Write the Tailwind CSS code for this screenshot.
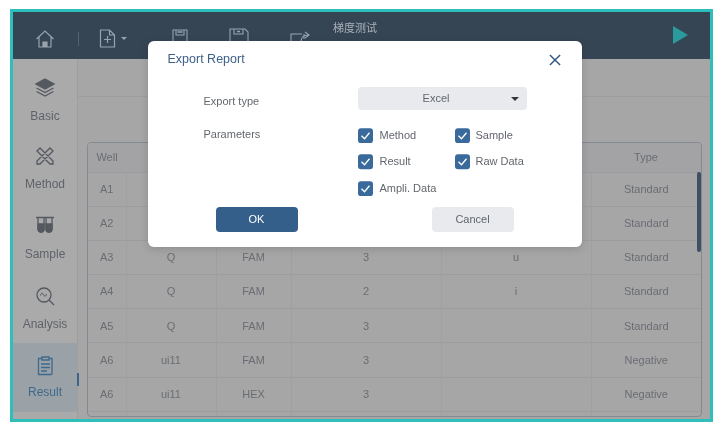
<!DOCTYPE html>
<html lang="en">
  <head>
    <meta charset="UTF-8">
    <title>Export Report</title>
    <script src="https://cdn.jsdelivr.net/npm/@tailwindcss/browser@4"></script>
  </head>
  <body class="font-['Liberation_Sans','Noto_Sans_CJK_SC',sans-serif] bg-white">
    <div class="w-[722px] h-[429px] bg-white pt-[9px] pl-[10px] pr-[9px] pb-[7px] overflow-hidden blur-[0.6px]">
      <div class="relative w-full h-full border-[3.5px] border-[#2fbfbb] bg-[#a6a6a7] flex flex-col overflow-hidden">

        <!-- top bar -->
        <header class="relative h-[47px] shrink-0 bg-[#364554] flex items-center text-[#98a3ad]">
          <div class="w-[65px] flex justify-center pt-[6px] pr-[2px]">
            <svg class="w-[20px] h-[20px]" viewBox="0 0 20 20" fill="none" stroke="currentColor" stroke-width="1.2"><path d="M1.5 10 10 2l8.5 8M4 8v10h12V8"/><path d="M8 18v-5h4v5" fill="currentColor"/></svg>
          </div>
          <div class="w-px h-[14px] bg-[#566472] mt-[6px]"></div>
          <div class="flex items-center ml-[20px] pt-[6px]">
            <svg class="w-[17px] h-[19px]" viewBox="0 0 16 19" fill="none" stroke="currentColor" stroke-width="1.2"><path d="M1 1h9l5 5v12H1zM10 1v5h5M8 7v7M4.5 10.500h7"/></svg>
            <span class="ml-[5px] w-0 h-0 border-x-[3px] border-x-transparent border-t-[3px] border-t-[#98a3ad]"></span>
          </div>
          <div class="flex items-center gap-[41px] ml-[45px] pt-[2px]">
            <svg class="w-[16px] h-[17px]" viewBox="0 0 16 17" fill="none" stroke="currentColor" stroke-width="1.100"><path d="M1 16V2h14v14M4 2v5h8V2"/><path d="M5.500 4h5" stroke-width="1.500"/></svg>
            <svg class="w-[20px] h-[17px]" viewBox="0 0 20 17" fill="none" stroke="currentColor" stroke-width="1.100"><path d="M1 16V1h15l3 3v12M5 1v5h9V1"/><path d="M8 3.500h3" stroke-width="1.500"/></svg>
            <svg class="w-[22px] h-[17px] mt-[6px]" viewBox="0 0 22 17" fill="none" stroke="currentColor" stroke-width="1.100"><path d="M12 3H1v14M14 8V3l0 0M11 11c0-5 3-7 7-7M15 1l4 3-4 3"/></svg>
          </div>
          <span class="absolute left-[320px] top-[9px] text-[11px] leading-[14px] text-[#a9b1b9]">梯度测试</span>
          <span class="absolute left-[660px] top-[13.500px] w-0 h-0 border-y-[9px] border-y-transparent border-l-[15px] border-l-[#2b9a9c]"></span>
        </header>

        <div class="flex flex-1 min-h-0">
          <!-- side nav -->
          <nav class="relative w-[65px] shrink-0 pt-[6.500px] bg-[#aaaaab] border-r border-[#9e9e9f] flex flex-col text-[12px] text-[#5f6368]">
            <a class="h-[69.4px] flex flex-col items-center pt-[12px]">
              <svg class="w-[20px] h-[19px] text-[#54595f]" viewBox="0 0 20 19" fill="none" stroke="currentColor" stroke-width="1.300"><path d="M10 1 19 6l-9 5-9-5z" fill="currentColor"/><path d="M1.500 10 10 14.500 18.500 10M1.500 13.500 10 18l8.500-4.500"/></svg>
              <span class="mt-[12.500px] leading-[14px]">Basic</span>
            </a>
            <a class="h-[69.4px] flex flex-col items-center pt-[11.500px]">
              <svg class="w-[20px] h-[20px] text-[#54595f]" viewBox="0 0 20 20" fill="none" stroke="currentColor" stroke-width="1.300"><path d="M2 5 5 2l13 13v3h-3zM15 2l3 3L5 18l-3 0 0-3z"/></svg>
              <span class="mt-[11px] leading-[14px]">Method</span>
            </a>
            <a class="h-[69.4px] flex flex-col items-center pt-[12px]">
              <svg class="w-[18px] h-[18px] text-[#54595f]" viewBox="0 0 18 18" fill="none" stroke="currentColor" stroke-width="1.300"><path d="M0 1.500h18M2 2v11a3 3 0 0 0 6 0V2M10 2v11a3 3 0 0 0 6 0V2"/><path d="M2 8h6v5a3 3 0 0 1-6 0zM10 8h6v5a3 3 0 0 1-6 0z" fill="currentColor"/></svg>
              <span class="mt-[13px] leading-[14px]">Sample</span>
            </a>
            <a class="h-[69.4px] flex flex-col items-center pt-[12px]">
              <svg class="w-[20px] h-[20px] text-[#54595f]" viewBox="0 0 20 20" fill="none" stroke="currentColor" stroke-width="1.300"><circle cx="9" cy="9" r="7"/><path d="m14 14 5 5"/><path d="M5.500 9.500c1-3 2-3 3-.8s2 2.300 3-.7" stroke-width="1"/></svg>
              <span class="mt-[11px] leading-[14px]">Analysis</span>
            </a>
            <a class="h-[69.4px] flex flex-col items-center pt-[12.500px] bg-[#9aa1a7] text-[#3f6a8c]">
              <svg class="w-[17px] h-[20px]" viewBox="0 0 17 20" fill="none" stroke="currentColor" stroke-width="1.300"><path d="M5 2.500H1.500v16h12.500a1 1 0 0 0 1-1V2.500h-3.500M5 1h7v3H5zM4 8h9M4 11.500h9M4 15h6"/></svg>
              <span class="mt-[9.500px] leading-[14px]">Result</span>
            </a>
            <span class="absolute right-[-2px] top-[314px] w-[2px] h-[13px] bg-[#3a6488]"></span>
          </nav>

          <!-- main content -->
          <main class="flex-1 min-w-0 flex flex-col">
            <div class="h-[38px] shrink-0 border-b border-[#9e9e9f]"></div>
            <div class="relative mt-[45px] ml-[9px] mr-[8px] h-[275px] border border-[#838a92] rounded-[4px] overflow-hidden text-[11px] text-[#6a6d72]">
              <table class="w-full table-fixed border-collapse text-center">
                <colgroup>
                  <col class="w-[38px]"><col class="w-[90px]"><col class="w-[75px]"><col class="w-[150px]"><col class="w-[150px]"><col>
                </colgroup>
                <thead>
                  <tr class="h-[29px] bg-[#a3a3a5] text-[#6a6d72]">
                    <th class="font-normal">Well</th><th></th><th></th><th></th><th></th><th class="font-normal">Type</th>
                  </tr>
                </thead>
                <tbody class="[&_tr]:h-[34.200px] [&_tr]:border-t [&_tr]:border-[#9d9d9f] [&_td]:border-l [&_td]:border-[#a0a0a2] [&_td:first-child]:border-l-0">
                  <tr><td>A1</td><td></td><td></td><td></td><td></td><td>Standard</td></tr>
                  <tr><td>A2</td><td></td><td></td><td></td><td></td><td>Standard</td></tr>
                  <tr><td>A3</td><td>Q</td><td>FAM</td><td>3</td><td>u</td><td>Standard</td></tr>
                  <tr><td>A4</td><td>Q</td><td>FAM</td><td>2</td><td>i</td><td>Standard</td></tr>
                  <tr><td>A5</td><td>Q</td><td>FAM</td><td>3</td><td></td><td>Standard</td></tr>
                  <tr><td>A6</td><td>ui11</td><td>FAM</td><td>3</td><td></td><td>Negative</td></tr>
                  <tr><td>A6</td><td>ui11</td><td>HEX</td><td>3</td><td></td><td>Negative</td></tr>
                  <tr><td></td><td></td><td></td><td></td><td></td><td></td></tr>
                </tbody>
              </table>
              <span class="absolute right-[0.500px] top-[29px] w-[3.500px] h-[80px] rounded-full bg-[#3f5066]"></span>
            </div>
          </main>
        </div>

        <!-- export dialog -->
        <div class="absolute left-[134.500px] top-[28.500px] w-[434px] h-[206px] bg-white rounded-[6px] shadow-[0_2px_8px_rgba(0,0,0,0.15)] pt-[10px] text-[11px] text-[#63676d]" role="dialog" aria-modal="true">
          <div class="flex items-center justify-between pl-[20px] pr-[21px] h-[18px]">
            <h3 class="text-[12.500px] font-normal text-[#3e6089]">Export Report</h3>
            <svg class="w-[12px] h-[12px] text-[#36577f]" viewBox="0 0 13 13" fill="none" stroke="currentColor" stroke-width="1.600"><path d="m1 1 11 11M12 1 1 12"/></svg>
          </div>
          <div class="flex mt-[18px]">
            <div class="w-[210px] pl-[56px] flex flex-col">
              <span class="h-[23px] leading-[23px] mt-[3px]">Export type</span>
              <span class="mt-[12px] leading-[18px]">Parameters</span>
            </div>
            <div>
              <div class="relative w-[169px] h-[23px] rounded-[4px] bg-[#e8eaee] pr-[12px] text-center leading-[23px]">
                Excel
                <span class="absolute right-[8px] top-[10px] w-0 h-0 border-x-[4px] border-x-transparent border-t-[4px] border-t-[#33373d]"></span>
              </div>
              <div class="grid grid-cols-[97px_auto] gap-y-[11px] mt-[18px] leading-[15.500px]">
                <label class="flex items-center gap-[7px]"><svg class="w-[15px] h-[15.500px]" viewBox="0 0 15 15"><rect width="15" height="15" rx="3" fill="#3a6a9b"/><path d="m3.500 7.500 3 3 5-6" fill="none" stroke="#fff" stroke-width="1.300"/></svg>Method</label>
                <label class="flex items-center gap-[6px]"><svg class="w-[15px] h-[15.500px]" viewBox="0 0 15 15"><rect width="15" height="15" rx="3" fill="#3a6a9b"/><path d="m3.500 7.500 3 3 5-6" fill="none" stroke="#fff" stroke-width="1.300"/></svg>Sample</label>
                <label class="flex items-center gap-[7px]"><svg class="w-[15px] h-[15.500px]" viewBox="0 0 15 15"><rect width="15" height="15" rx="3" fill="#3a6a9b"/><path d="m3.500 7.500 3 3 5-6" fill="none" stroke="#fff" stroke-width="1.300"/></svg>Result</label>
                <label class="flex items-center gap-[6px]"><svg class="w-[15px] h-[15.500px]" viewBox="0 0 15 15"><rect width="15" height="15" rx="3" fill="#3a6a9b"/><path d="m3.500 7.500 3 3 5-6" fill="none" stroke="#fff" stroke-width="1.300"/></svg>Raw Data</label>
                <label class="flex items-center gap-[7px]"><svg class="w-[15px] h-[15.500px]" viewBox="0 0 15 15"><rect width="15" height="15" rx="3" fill="#3a6a9b"/><path d="m3.500 7.500 3 3 5-6" fill="none" stroke="#fff" stroke-width="1.300"/></svg>Ampli. Data</label>
              </div>
            </div>
          </div>
          <div class="flex justify-between pl-[68px] pr-[68px] mt-[10.500px]">
            <button class="w-[82px] h-[25px] rounded-[4px] bg-[#335f8a] text-white">OK</button>
            <button class="w-[82px] h-[25px] rounded-[4px] bg-[#e8eaee] text-[#63676d]">Cancel</button>
          </div>
        </div>
      </div>
    </div>
  </body>
</html>
